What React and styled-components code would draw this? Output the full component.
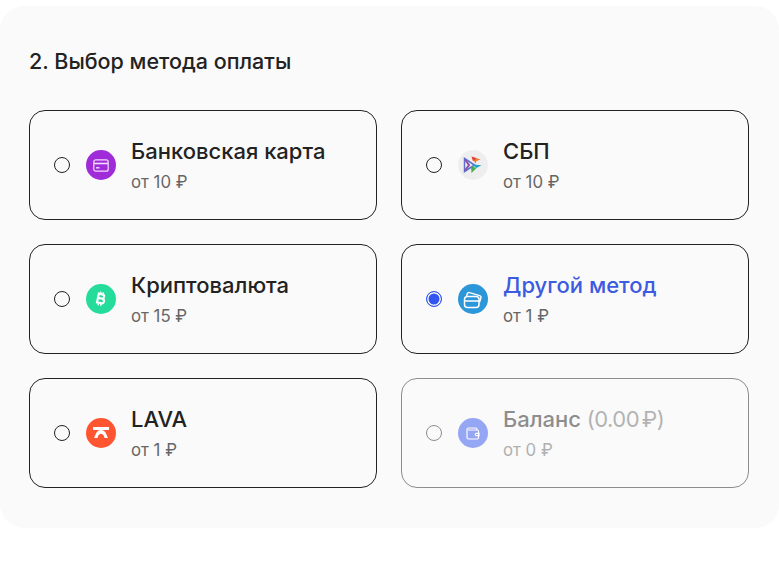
import React from 'react';
import styled, { createGlobalStyle } from 'styled-components';

const GlobalStyle = createGlobalStyle`
  html, body {
    margin: 0;
    padding: 0;
    background: #ffffff;
  }
  body {
    font-family: Inter, "Noto Sans", sans-serif;
    color: #222222;
  }
`;

const CardIcon = () => (
  <svg width="16" height="13" viewBox="0 0 16 13" fill="none" stroke="#f3dcfb" strokeWidth="1.200">
    <rect x="0.800" y="0.800" width="14.400" height="11.400" rx="2" />
    <path d="M1 4.500h14" strokeWidth="1.600" />
    <path d="M3 8.800h3.500" strokeWidth="1.400" />
  </svg>
);

const SbpIcon = () => (
  <svg width="20" height="20" viewBox="0 0 20 20" fill="none" strokeWidth="1.500">
    <path d="M1.500 3.500L11.500 10 1.500 16.500z" stroke="#5c6fd0" />
    <path d="M2 4.500L6 10l-4 5.500" stroke="#8d4ea8" strokeWidth="2" />
    <path d="M8.500 1.500l9 3-4 1.500-1 2.500z" fill="#ef7a2a" />
    <path d="M8.500 1.500l5 1.700-3.500 3z" fill="#e0443f" />
    <path d="M9 9.500l9.500 .8-5 2.700z" fill="#1fa2c9" />
    <path d="M8 11l5.500 2-5 5z" fill="#46ad52" />
  </svg>
);

const BitcoinIcon = () => (
  <svg width="12" height="16" viewBox="0 0 11 15" fill="none" stroke="#fff" strokeWidth="2" transform="rotate(12)">
    <path d="M2.500 3h3.400a2 2 0 0 1 0 4H2.500h4a2.200 2.200 0 0 1 0 4.400H2.500V3z" />
    <path d="M4 .8V3M6.500 .8V3M4 11.400v2.400M6.500 11.400v2.400" strokeWidth="1.300" />
  </svg>
);

const CardsIcon = () => (
  <svg width="20" height="19" viewBox="0 0 20 19" fill="none" stroke="#fff" strokeWidth="1.500">
    <rect x="1.500" y="6.500" width="14.500" height="11" rx="3" />
    <path d="M1.500 11h14.500" />
    <path d="M3.500 6l.9-2.400a1.700 1.700 0 0 1 2.100-1l10.200 3a1.700 1.700 0 0 1 1.200 2.100l-1.400 4.500" />
  </svg>
);

const LavaIcon = () => (
  <svg width="18" height="12" viewBox="0 0 18 12" fill="#fff">
    <path d="M1 0h16v3H1z" />
    <path d="M9 3c2.500 0 4 1.500 5 3.500L16 11h-3.400C12 9 11 6.800 9 6.800S6 9 5.400 11H2l2-4.500C5 4.500 6.500 3 9 3z" />
  </svg>
);

const WalletIcon = () => (
  <svg width="14" height="13" viewBox="0 0 14 13" fill="none" stroke="#fff" strokeWidth="1.200">
    <path d="M11 3V2.200A1.200 1.200 0 0 0 9.800 1H2.500A1.500 1.500 0 0 0 1 2.500v8A1.500 1.500 0 0 0 2.500 12h8.800a1.200 1.200 0 0 0 1.200-1.200V4.200A1.200 1.200 0 0 0 11.300 3H2" />
    <path d="M13 6.300h-2.500a1.200 1.200 0 0 0 0 2.400H13z" />
  </svg>
);

const methods = [
  { id: 'card', name: 'Банковская карта', price: 'от 10 ₽', color: '#a02bd8', Icon: CardIcon },
  { id: 'sbp', name: 'СБП', price: 'от 10 ₽', color: '#eeeeee', Icon: SbpIcon },
  { id: 'crypto', name: 'Криптовалюта', price: 'от 15 ₽', color: '#26dc9b', Icon: BitcoinIcon },
  { id: 'other', name: 'Другой метод', price: 'от 1 ₽', color: '#2b96d8', Icon: CardsIcon, selected: true },
  { id: 'lava', name: 'LAVA', price: 'от 1 ₽', color: '#ff5530', Icon: LavaIcon },
  { id: 'balance', name: 'Баланс', extra: '(0.00 ₽)', price: 'от 0 ₽', color: '#3355f0', Icon: WalletIcon, disabled: true },
];

export default function App() {
  return (
    <>
      <GlobalStyle />
      <Panel>
        <Title>2. Выбор метода оплаты</Title>
        <Grid>
          {methods.map(({ id, name, extra, price, color, Icon, selected, disabled }) => (
            <Method key={id} $disabled={disabled}>
              <Radio type="radio" name="method" defaultChecked={selected} disabled={disabled} />
              <IconCircle $color={color}>
                <Icon />
              </IconCircle>
              <Info>
                <Name $selected={selected}>
                  {name}
                  {extra && <Extra> {extra}</Extra>}
                </Name>
                <Price>{price}</Price>
              </Info>
            </Method>
          ))}
        </Grid>
      </Panel>
    </>
  );
}

const Panel = styled.div`
  margin-top: 6px;
  height: 522px;
  box-sizing: border-box;
  padding: 41px 30px 0 29px;
  background: #fafafa;
  border-radius: 24px;
`;

const Title = styled.div`
  font-size: 21.500px;
  line-height: 28px;
  font-weight: 550;
  color: #222222;
  margin-bottom: 35px;
`;

const Grid = styled.div`
  display: grid;
  grid-template-columns: 348px 348px;
  grid-auto-rows: 110px;
  gap: 24px;
`;

const Method = styled.label`
  display: flex;
  align-items: center;
  box-sizing: border-box;
  padding-left: 24px;
  border: 1px solid #222222;
  border-radius: 16px;
  opacity: ${(p) => (p.$disabled ? 0.5 : 1)};
`;

const Radio = styled.input`
  appearance: none;
  box-sizing: border-box;
  width: 16px;
  height: 16px;
  margin: 0 16px 0 0;
  border: 1px solid #222222;
  border-radius: 50%;
  background: transparent;

  &:checked {
    border-color: #3355f0;
    background: #3355f0;
    box-shadow: inset 0 0 0 1.500px #fafafa;
  }
`;

const IconCircle = styled.span`
  display: flex;
  align-items: center;
  justify-content: center;
  flex: none;
  width: 30px;
  height: 30px;
  margin-right: 15px;
  border-radius: 50%;
  background: ${(p) => p.$color};
`;

const Info = styled.span`
  display: flex;
  flex-direction: column;
  gap: 7px;
`;

const Name = styled.span`
  font-size: 22px;
  line-height: 26px;
  font-weight: 550;
  color: ${(p) => (p.$selected ? '#3d5be0' : '#222222')};
`;

const Extra = styled.span`
  margin-left: 3px;
  font-weight: 400;
  letter-spacing: -0.5px;
  word-spacing: -3px;
  opacity: 0.65;
`;

const Price = styled.span`
  font-size: 16.800px;
  line-height: 22px;
  color: #666666;
`;
